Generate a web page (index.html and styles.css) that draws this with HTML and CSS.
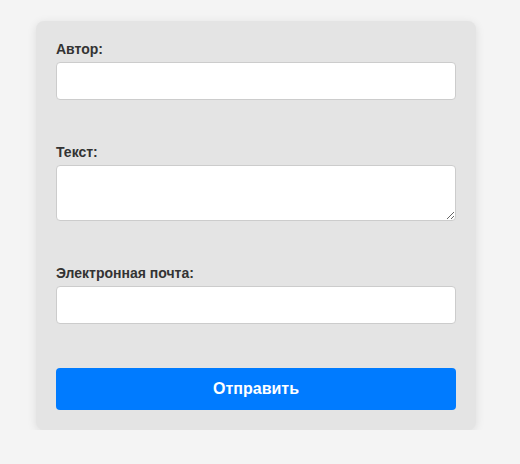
FILE: index.html
```html
<!DOCTYPE html>
<html lang="ru">
<head>
<meta charset="utf-8">
<title>Форма</title>
<link rel="stylesheet" href="styles.css">
</head>
<body>
<form class="card">
  <div class="group">
    <label class="label" for="author">Автор:</label>
    <input class="field" id="author" type="text">
  </div>
  <div class="group">
    <label class="label" for="text">Текст:</label>
    <textarea class="field area" id="text"></textarea>
  </div>
  <div class="group">
    <label class="label" for="email">Электронная почта:</label>
    <input class="field" id="email" type="email">
  </div>
  <button class="submit" type="button">Отправить</button>
</form>
</body>
</html>
```
FILE: styles.css
```css
html, body {
  margin: 0;
  padding: 0;
  background: #f4f4f4;
  font-family: "Liberation Sans", Arial, sans-serif;
}
.card {
  box-sizing: border-box;
  width: 440px;
  margin: 21px 0 0 36px;
  padding: 20px;
  background: #e4e4e4;
  border-radius: 8px;
  box-shadow: 0 2px 10px rgba(0, 0, 0, 0.1);
  display: flex;
  flex-direction: column;
}
.group {
  display: flex;
  flex-direction: column;
  margin-bottom: 44px;
}
.label {
  display: block;
  font-size: 14px;
  line-height: 16px;
  font-weight: bold;
  color: #333;
  margin-bottom: 5px;
}
.field {
  display: block;
  box-sizing: border-box;
  width: 100%;
  height: 38px;
  margin: 0;
  padding: 8px 10px;
  border: 1px solid #ccc;
  border-radius: 4px;
  background: #fff;
  font-family: "Liberation Sans", Arial, sans-serif;
  font-size: 14px;
}
.area {
  height: 56px;
  resize: vertical;
}
.submit {
  display: block;
  box-sizing: border-box;
  width: 100%;
  height: 42px;
  margin: 0;
  border: none;
  border-radius: 4px;
  background: #007bff;
  color: #fff;
  font-family: "Liberation Sans", Arial, sans-serif;
  font-size: 16px;
  font-weight: bold;
}
```
